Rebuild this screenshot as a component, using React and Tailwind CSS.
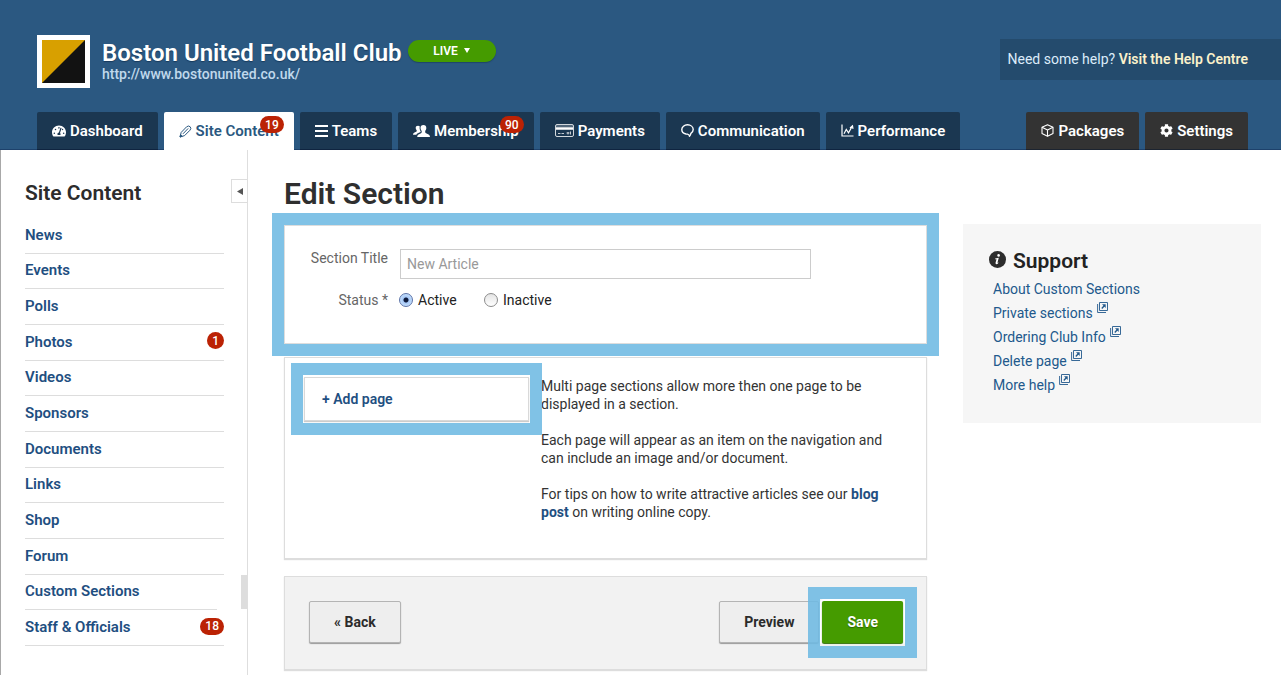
import React from "react";
import { FaTachometerAlt, FaCog } from "react-icons/fa";

function PencilIcon() {
  return (
    <svg width="13" height="13" viewBox="0 0 13 13" fill="none" stroke="currentColor" strokeWidth="1" strokeLinejoin="round">
      <path d="M1 12 L2.2 7.4 L7.6 1.8 Q9.6 .2 11.2 1.8 Q12.6 3.4 11 5.2 L5.6 10.6 Z" />
      <path d="M4 8.8 L9.200 3.400" />
      <path d="M1 12 L1.6 9.8 L3.2 11.3 Z" fill="currentColor" />
    </svg>
  );
}

function LinesIcon() {
  return (
    <svg width="13" height="12" viewBox="0 0 13 12" fill="currentColor">
      <path d="M0 0h13v2H0zM0 5h13v2H0zM0 10h13v2H0z" />
    </svg>
  );
}

function PeopleIcon() {
  return (
    <svg width="17" height="12" viewBox="0 0 17 12" fill="currentColor">
      <path d="M10.4 0c1.9 0 3 1.3 2.9 3.1 0 1.3-.5 2.2-1.1 2.9v1.3c.2.8 1.1 1.1 2.4 1.6 1.5.6 2.3 1.2 2.4 3.1H4.2c.1-1.9.8-2.5 2.4-3.1 1.300-.5 1.900-.8 2.100-1.600V6c-.7-.7-1.100-1.600-1.200-2.900C7.500 1.300 8.500 0 10.400 0z" />
      <path d="M5 .8c.9 0 1.500.3 1.800.8-.5 1.700-.1 3.500.9 4.800-.1.700-1 1-1.900 1.400-1.100.5-2 1-2.400 2H0c.1-1.400.7-2 2-2.500 1-.4 1.600-.6 1.700-1.200v-.9C3.100 4.700 2.700 4 2.700 3 2.700 1.700 3.500.8 5 .8z" />
    </svg>
  );
}

function CardIcon() {
  return (
    <svg width="19" height="13" viewBox="0 0 19 13" fill="none" stroke="currentColor">
      <rect x=".5" y=".5" width="18" height="12" rx="1.500" strokeOpacity=".8" />
      <path d="M1 4.500h17" strokeWidth="2.500" />
      <path d="M1 2h17" strokeWidth=".5" />
      <path d="M3 9.500h2.500M6.500 9.500h2.500M11.500 9h3M13 8v2.500M15.500 7.500v3" strokeOpacity=".75" />
    </svg>
  );
}

function BubbleIcon() {
  return (
    <svg width="13" height="13" viewBox="0 0 13 13" fill="none" stroke="currentColor" strokeWidth="1.400" strokeLinejoin="round">
      <path d="M5 10 C2.500 9.600 .8 7.800 .8 5.600 C.8 2.900 3.300 .8 6.500 .8 S12.200 2.900 12.200 5.600 C12.200 7.300 11.200 8.600 9.900 9.400 C9.700 10.600 9.300 11.500 8.500 12.200 C8.400 11.200 7.700 10.300 6.500 10.100 Z" />
    </svg>
  );
}

function ChartIcon() {
  return (
    <svg width="13" height="13" viewBox="0 0 13 13" fill="none" stroke="currentColor" strokeWidth="1.200">
      <path d="M1 .5V12H12.500" />
      <path d="M3 9.800L5.300 5.500L7.500 8.800L11.500 1.800M9 4L11.500 1.800L12 4.800" />
    </svg>
  );
}

function CubeIcon() {
  return (
    <svg width="13" height="13" viewBox="0 0 13 13" fill="none" stroke="currentColor" strokeWidth="1.100" strokeLinejoin="round">
      <path d="M6.500 .8L12 3.300V9.600L6.500 12.300L1 9.600V3.300Z" />
      <path d="M1 3.300L6.500 6L12 3.300M6.500 6V12.300" />
    </svg>
  );
}

function ExternalIcon() {
  return (
    <svg className="mb-3 shrink-0" width="11" height="11" viewBox="0 0 11 11" fill="none" stroke="currentColor">
      <path d="M2.500 .5H10.500V8.500H2.500Z" strokeWidth=".9" />
      <path d="M.6 2V10.500H9" strokeWidth=".9" />
      <path d="M4.800 6.500L7.500 3.500" strokeWidth="1.300" />
      <path d="M5 2.300H8.700V6Z" fill="currentColor" stroke="none" />
    </svg>
  );
}

function InfoIcon() {
  return (
    <svg className="mb-[3px]" width="17" height="17" viewBox="0 0 17 17" fill="#2c2c2c">
      <circle cx="8.500" cy="8.500" r="8.500" />
      <circle cx="9.600" cy="4.400" r="1.300" fill="#fff" />
      <path d="M6.200 7.400L9.800 6.700L8.500 11.600Q8.500 12.200 9.900 11.200Q8.800 13.400 7.200 13.200Q6.200 13 6.600 11.600L7.500 8.200H6Z" fill="#fff" />
    </svg>
  );
}

const tabs = [
  { label: "Dashboard", icon: <FaTachometerAlt size={14} /> },
  { label: "Site Content", icon: <PencilIcon />, badge: "19", active: true },
  { label: "Teams", icon: <LinesIcon /> },
  { label: "Membership", icon: <PeopleIcon />, badge: "90" },
  { label: "Payments", icon: <CardIcon /> },
  { label: "Communication", icon: <BubbleIcon /> },
  { label: "Performance", icon: <ChartIcon /> },
];

const utilityTabs = [
  { label: "Packages", icon: <CubeIcon /> },
  { label: "Settings", icon: <FaCog size={13} /> },
];

const sections = [
  { label: "News" },
  { label: "Events" },
  { label: "Polls" },
  { label: "Photos", badge: "1" },
  { label: "Videos" },
  { label: "Sponsors" },
  { label: "Documents" },
  { label: "Links" },
  { label: "Shop" },
  { label: "Forum" },
  { label: "Custom Sections", current: true },
  { label: "Staff & Officials", badge: "18" },
];

const supportLinks = [
  { label: "About Custom Sections" },
  { label: "Private sections", external: true },
  { label: "Ordering Club Info", external: true },
  { label: "Delete page", external: true },
  { label: "More help", external: true },
];

function Tab({ label, icon, badge, active, tone }) {
  const colours = active
    ? "bg-white text-[#2a5880]"
    : tone === "dark"
      ? "border-b border-[#1c2430] bg-[#333333] text-white"
      : "border-b border-[#0f2440] bg-[#1b3751] text-white";
  return (
    <a href="#" className={`relative flex h-[38px] items-center gap-1 rounded-t-xs px-[15px] text-[15px] font-semibold whitespace-nowrap ${colours}`}>
      <span className="flex">{icon}</span>
      <span className="pt-[2px]">{label}</span>
      {badge && (
        <span className="absolute top-1 right-[10px] flex h-[17px] items-center rounded-full bg-[#bb2204] px-[5px] text-xs font-medium text-white">
          {badge}
        </span>
      )}
    </a>
  );
}

function Highlight({ className }) {
  return <div aria-hidden="true" className={`pointer-events-none absolute z-10 border-[12px] border-[#6ebae2]/88 ${className}`} />;
}

const radioClass =
  "size-[14px] appearance-none rounded-full border border-[#8c8c8c] bg-linear-to-b from-[#e4e4e4] to-white checked:border-[#5c73a8] checked:bg-[radial-gradient(circle,#0d1a3c_0_2px,#a6c8f7_3px,#c3defc_6px)]";

const plainButton =
  "h-[42px] rounded-xs border border-[#b4b4b4] bg-[#eeeeee] px-6 text-sm font-bold text-[#2b2b2b] shadow-[0_1px_1px_#999]";

export default function App() {
  return (
    <div className="flex min-h-screen flex-col border-l border-[#a8a8a8] bg-white font-[Roboto,sans-serif] text-sm text-[#333333]">
      <header className="-ml-px flex h-[150px] flex-col justify-between border-b border-[#1d416b] bg-[#2b5881]">
        <div className="flex items-start justify-between pt-[35px]">
          <div className="flex pl-[37px]">
            <svg className="size-[53px] bg-white" viewBox="0 0 53 53">
              <rect x="5" y="5" width="43" height="43" fill="#121212" />
              <path d="M5 5H48L5 48Z" fill="#d8a000" />
            </svg>
            <div className="pt-[5px] pl-3">
              <div className="flex items-center gap-[6px]">
                <h1 className="text-2xl leading-[26px] font-semibold whitespace-nowrap text-white text-shadow-[0_1px_1px_#173a5c]">
                  Boston United Football Club
                </h1>
                <button type="button" className="-mt-1 flex h-[22px] w-[88px] items-center justify-center gap-[6px] rounded-full bg-[#459b00] text-xs font-semibold text-white shadow-[0_1px_1px_#1f4668]">
                  LIVE
                  <svg className="mb-[2px]" width="6" height="5" viewBox="0 0 6 5" fill="currentColor">
                    <path d="M0 0H6L3 5Z" />
                  </svg>
                </button>
              </div>
              <a href="#" className="block text-sm leading-4 font-medium text-[#c0d8ec]">
                http://www.bostonunited.co.uk/
              </a>
            </div>
          </div>
          <p className="mt-1 bg-[#244b6d] py-[10px] pr-[33px] pl-2 text-sm leading-[21px] whitespace-nowrap text-[#dcecfa]">
            Need some help?{" "}
            <a href="#" className="font-semibold text-[#fbf1cb]">
              Visit the Help Centre
            </a>
          </p>
        </div>
        <nav className="-mb-px flex justify-between pr-[33px] pl-[37px]">
          <div className="flex gap-[6px]">
            {tabs.map((tab) => (
              <Tab key={tab.label} {...tab} />
            ))}
          </div>
          <div className="flex gap-[6px]">
            {utilityTabs.map((tab) => (
              <Tab key={tab.label} {...tab} tone="dark" />
            ))}
          </div>
        </nav>
      </header>

      <div className="flex flex-1">
        <aside className="relative w-[247px] shrink-0 border-r border-[#dedede] pr-[23px] pl-6">
          <button type="button" aria-label="Collapse menu" className="absolute top-[29px] right-0 flex h-6 w-4 items-center justify-center border border-r-0 border-[#dddddd] bg-white text-[#555555]">
            <svg width="6" height="7" viewBox="0 0 6 7" fill="currentColor">
              <path d="M6 0V7L0 3.500Z" />
            </svg>
          </button>
          <h2 className="pt-[29px] text-[21px] leading-7 font-semibold text-[#2c2c2c]">Site Content</h2>
          <ul className="mt-[11px] grid h-[428px] auto-rows-fr">
            {sections.map((section) => (
              <li key={section.label} className={`relative flex items-center border-b border-[#dddddd] ${section.current ? "mr-[7px]" : ""}`}>
                <a href="#" className="flex-1 text-[15px] font-semibold text-[#1f4f81]">
                  {section.label}
                </a>
                {section.badge && (
                  <span className="mb-[3px] flex h-[17px] items-center rounded-full bg-[#bb2204] px-[5px] text-xs font-medium text-white">
                    {section.badge}
                  </span>
                )}
                {section.current && <span className="absolute inset-y-0 -right-[30px] w-[6px] bg-[#dddddd]" />}
              </li>
            ))}
          </ul>
        </aside>

        <main className="min-w-0 flex-1 pl-9">
          <h1 className="pt-[26px] text-3xl leading-9 font-semibold text-[#2f2f2f]">Edit Section</h1>

          <form className="mt-[13px]">
            <div className="relative h-[119px] border border-[#dddddd] pt-[23px] pl-6">
              <div className="flex">
                <label htmlFor="section-title" className="w-[79px] text-right leading-[18px] text-[#666666]">
                  Section Title
                </label>
                <input id="section-title" type="text" placeholder="New Article" className="ml-3 h-[30px] w-[411px] border border-[#cccccc] px-[6px] placeholder:text-[#999999]" />
              </div>
              <fieldset className="mt-[11px] flex items-center">
                <legend className="float-left w-[79px] text-right leading-[18px] text-[#666666]">Status *</legend>
                <label className="ml-[11px] flex w-[85px] items-center gap-[5px] text-[#222222]">
                  <input type="radio" name="status" defaultChecked className={radioClass} />
                  Active
                </label>
                <label className="flex items-center gap-[5px] text-[#222222]">
                  <input type="radio" name="status" className={radioClass} />
                  Inactive
                </label>
              </fieldset>
              <Highlight className="-inset-[13px]" />
            </div>

            <div className="mt-[13px] flex h-[202px] items-start border border-[#dddddd] pt-[19px] pl-[19px] shadow-[0_1px_1px_#dddddd]">
              <div className="relative w-[225px] shrink-0">
                <button type="button" className="block h-11 w-full border border-[#d9d9d9] bg-white px-[17px] text-left font-semibold text-[#1f4f81] shadow-[0_1px_1px_#cccccc]">
                  + Add page
                </button>
                <Highlight className="-inset-x-[13px] -inset-y-[14px]" />
              </div>
              <div className="box-content w-[350px] space-y-[18px] pl-3 leading-[18px]">
                <p>Multi page sections allow more then one page to be displayed in a section.</p>
                <p>Each page will appear as an item on the navigation and can include an image and/or document.</p>
                <p>
                  For tips on how to write attractive articles see our{" "}
                  <a href="#" className="font-bold text-[#1f4f81]">
                    blog post
                  </a>{" "}
                  on writing online copy.
                </p>
              </div>
            </div>

            <div className="mt-[17px] flex h-[94px] items-start border border-[#dddddd] bg-[#f2f2f2] pt-6 pr-[23px] pl-6 shadow-[0_1px_1px_#dddddd]">
              <button type="button" className={plainButton}>
                « Back
              </button>
              <button type="button" className={`${plainButton} ml-auto`}>
                Preview
              </button>
              <div className="relative ml-[3px]">
                <button type="submit" className="block h-[42px] rounded-xs bg-[#459b00] px-[25px] text-sm font-bold text-white shadow-[0_1px_1px_#2f6d00,0_0_0_2px_#ffffff] text-shadow-[0_1px_1px_#2c6200]">
                  Save
                </button>
                <Highlight className="-inset-x-[14px] -top-[14px] -bottom-[15px]" />
              </div>
            </div>
          </form>
        </main>

        <aside className="mt-[74px] mr-5 ml-9 h-[199px] w-[298px] shrink-0 bg-[#f6f6f6] pt-[23px] pl-[26px]">
          <h2 className="flex items-center gap-[7px] text-[21px] leading-7 font-semibold text-[#222222]">
            <InfoIcon />
            Support
          </h2>
          <ul className="mt-[2px] pl-1">
            {supportLinks.map((link) => (
              <li key={link.label} className="h-6">
                <a href="#" className="flex h-6 items-center gap-1 text-[#22598c]">
                  {link.label}
                  {link.external && <ExternalIcon />}
                </a>
              </li>
            ))}
          </ul>
        </aside>
      </div>
    </div>
  );
}
